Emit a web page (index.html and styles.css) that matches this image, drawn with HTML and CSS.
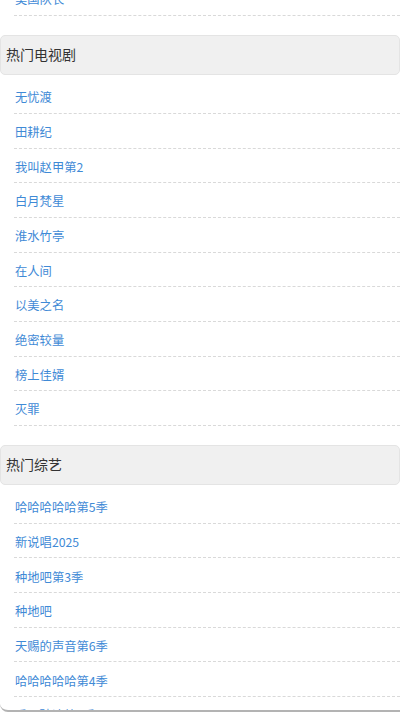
FILE: index.html
```html
<!DOCTYPE html>
<html lang="zh-CN">
<head>
<meta charset="utf-8">
<title>热门</title>
<link rel="stylesheet" href="styles.css">
</head>
<body>
<div class="page">
  <div class="content">
    <ul class="list list-prev">
      <li class="item"><a href="#">美国队长</a></li>
    </ul>

    <section class="section">
      <div class="heading">热门电视剧</div>
      <ul class="list">
        <li class="item"><a href="#">无忧渡</a></li>
        <li class="item"><a href="#">田耕纪</a></li>
        <li class="item"><a href="#">我叫赵甲第2</a></li>
        <li class="item"><a href="#">白月梵星</a></li>
        <li class="item"><a href="#">淮水竹亭</a></li>
        <li class="item"><a href="#">在人间</a></li>
        <li class="item"><a href="#">以美之名</a></li>
        <li class="item"><a href="#">绝密较量</a></li>
        <li class="item"><a href="#">榜上佳婿</a></li>
        <li class="item"><a href="#">灭罪</a></li>
      </ul>
    </section>

    <section class="section">
      <div class="heading">热门综艺</div>
      <ul class="list">
        <li class="item"><a href="#">哈哈哈哈哈第5季</a></li>
        <li class="item"><a href="#">新说唱2025</a></li>
        <li class="item"><a href="#">种地吧第3季</a></li>
        <li class="item"><a href="#">种地吧</a></li>
        <li class="item"><a href="#">天赐的声音第6季</a></li>
        <li class="item"><a href="#">哈哈哈哈哈第4季</a></li>
        <li class="item"><a href="#">乘风破浪第6季</a></li>
        <li class="item"><a href="#">奔跑吧第9季</a></li>
      </ul>
    </section>
  </div>
</div>
</body>
</html>
```
FILE: styles.css
```css
html, body {
  margin: 0;
  padding: 0;
  background: #ffffff;
}

body {
  font-family: "Noto Sans CJK SC", "Noto Sans", "Liberation Sans", sans-serif;
}

.page {
  height: 712px;
  box-sizing: border-box;
  overflow: hidden;
  border-bottom: 2px solid #b3b3b3;
  border-bottom-left-radius: 8px;
  background: #ffffff;
}

.content {
  display: flex;
  flex-direction: column;
}

.list {
  list-style: none;
  margin: 4.6px 0 0 0;
  padding: 0 0 0 14px;
}

.list-prev {
  margin-top: -18.7px;
}

.item {
  height: 34.67px;
  box-sizing: border-box;
  border-bottom: 1px dashed #d9d9d9;
  display: flex;
  align-items: center;
  padding-left: 1px;
}

.item a {
  color: #3f8ad6;
  text-decoration: none;
  font-size: 12.3px;
  line-height: 1;
  margin-top: 3px;
}

.section {
  margin-top: 18.7px;
}

.heading {
  height: 40px;
  box-sizing: border-box;
  background: #f0f0f0;
  border: 1px solid #e4e4e4;
  border-radius: 5px;
  display: flex;
  align-items: center;
  padding-left: 5px;
  padding-bottom: 1px;
  font-size: 14px;
  color: #333333;
}
```
